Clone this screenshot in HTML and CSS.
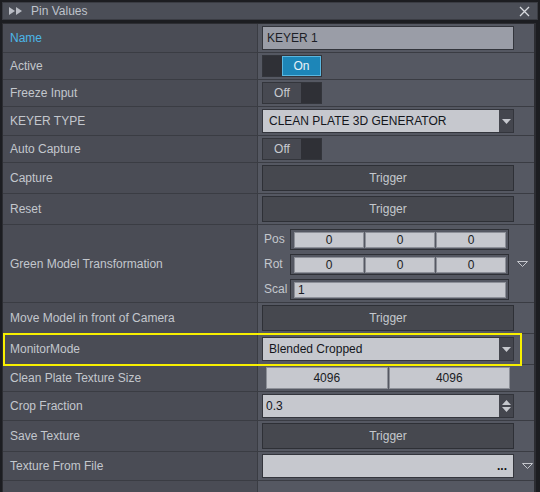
FILE: index.html
```html
<!DOCTYPE html>
<html>
<head>
<meta charset="utf-8">
<link rel="stylesheet" href="styles.css">
</head>
<body>
<div class="window">
  <div class="titlebar">
    <span class="ticon"><svg width="14" height="8" viewBox="0 0 14 8"><path d="M0 0 L6 4 L0 8 Z M7 0 L13 4 L7 8 Z" fill="#b9bcc4"/></svg></span>
    <span class="title">Pin Values</span>
    <span class="close"><svg width="11" height="11" viewBox="0 0 11 11"><path d="M1 1 L10 10 M10 1 L1 10" stroke="#d8dadf" stroke-width="1.3"/></svg></span>
  </div>
  <div class="panel">
    <div class="row h29"><div class="lab blue">Name</div><div class="val"><div class="text dim">KEYER 1</div></div></div>
    <div class="row h27"><div class="lab">Active</div><div class="val"><div class="toggle"><span class="tdark"></span><span class="ton">On</span></div></div></div>
    <div class="row h27"><div class="lab">Freeze Input</div><div class="val"><div class="toggle"><span class="toff">Off</span><span class="tdark"></span></div></div></div>
    <div class="row h29"><div class="lab">KEYER TYPE</div><div class="val"><div class="combo"><span class="ctext">CLEAN PLATE 3D GENERATOR</span><span class="carrow"><svg width="9" height="5" viewBox="0 0 9 5"><path d="M0 0 H9 L4.5 5 Z" fill="#c6c8ce"/></svg></span></div></div></div>
    <div class="row h27"><div class="lab">Auto Capture</div><div class="val"><div class="toggle"><span class="toff">Off</span><span class="tdark"></span></div></div></div>
    <div class="row h31"><div class="lab">Capture</div><div class="val"><div class="btn">Trigger</div></div></div>
    <div class="row h31"><div class="lab">Reset</div><div class="val"><div class="btn">Trigger</div></div></div>
    <div class="row h78"><div class="lab">Green Model Transformation</div><div class="val vec">
      <div class="vecgrid">
        <div class="vl">Pos</div><div class="vbox"><span>0</span><span>0</span><span>0</span></div>
        <div class="vl">Rot</div><div class="vbox"><span>0</span><span>0</span><span>0</span></div>
        <div class="vl">Scal</div><div class="vbox single"><span>1</span></div>
      </div>
      <span class="side"><svg width="11" height="6" viewBox="0 0 11 6"><path d="M0.5 0.5 H10.5 L5.5 5.5 Z" fill="none" stroke="#c4c6cc"/></svg></span>
    </div></div>
    <div class="row h31"><div class="lab">Move Model in front of Camera</div><div class="val"><div class="btn">Trigger</div></div></div>
    <div class="row h31 hl"><div class="lab">MonitorMode</div><div class="val"><div class="combo"><span class="ctext">Blended Cropped</span><span class="carrow"><svg width="9" height="5" viewBox="0 0 9 5"><path d="M0 0 H9 L4.5 5 Z" fill="#c6c8ce"/></svg></span></div></div><div class="hlbox"></div></div>
    <div class="row h27"><div class="lab">Clean Plate Texture Size</div><div class="val"><div class="pair"><span>4096</span><span>4096</span></div></div></div>
    <div class="row h29"><div class="lab">Crop Fraction</div><div class="val"><div class="combo"><span class="ctext num">0.3</span><span class="carrow spin"><svg width="9" height="14" viewBox="0 0 9 14"><path d="M0 6 L4.5 1 L9 6 Z M0 8 H9 L4.5 13 Z" fill="#c6c8ce"/></svg></span></div></div></div>
    <div class="row h31"><div class="lab">Save Texture</div><div class="val"><div class="btn">Trigger</div></div></div>
    <div class="row h29"><div class="lab">Texture From File</div><div class="val vec"><div class="file"><span class="dots">...</span></div><span class="side"><svg width="11" height="6" viewBox="0 0 11 6"><path d="M0.5 0.5 H10.5 L5.5 5.5 Z" fill="none" stroke="#c4c6cc"/></svg></span></div></div>
    <div class="row last"><div class="lab"></div><div class="val"></div></div>
  </div>
</div>
</body>
</html>
```
FILE: styles.css
```css
* { box-sizing: border-box; }
html, body { margin: 0; padding: 0; }
body {
  background: #1c1d21;
  width: 540px;
  height: 492px;
  overflow: hidden;
  font-family: "Liberation Sans", Arial, sans-serif;
  font-size: 12px;
  color: #c6c9cf;
}
.window {
  padding: 2px 2px 0 2px;
  height: 492px;
  display: flex;
  flex-direction: column;
}
.titlebar {
  height: 18px;
  background: #4b4e57;
  border: 1px solid #3a3c43;
  display: flex;
  align-items: center;
  padding-left: 6px;
}
.ticon { display: flex; width: 14px; margin-right: 8px; }
.title { color: #bfc3cb; font-size: 12px; flex: 1; }
.close { display: flex; margin-right: 7px; }
.panel {
  margin-top: 3px;
  flex: 1;
  border-left: 1px solid #2c2d32;
  border-top: 1px solid #2c2d32;
  border-right: 2px solid #2c2d32;
  display: flex;
  flex-direction: column;
  margin-right: 2px;
}
.row {
  display: grid;
  grid-template-columns: 255px 1fr;
  border-bottom: 1px solid #3a3c43;
  position: relative;
}
.row.last { flex: 1; border-bottom: none; }
.h27 { height: 27px; }
.h29 { height: 29px; }
.h31 { height: 31px; }
.h78 { height: 78px; }
.lab {
  background: #4a4c55;
  display: flex;
  align-items: center;
  padding-left: 7px;
  color: #c3c7cd;
  border-right: 1px solid #3a3c43;
}
.lab.blue { color: #4cb6e8; }
.val {
  background: #555862;
  display: flex;
  align-items: center;
  padding-left: 4px;
}
.text {
  width: 252px;
  height: 24px;
  background: #9a9da7;
  border: 1px solid #33353c;
  display: flex;
  align-items: center;
  padding-left: 4px;
  color: #1c1e26;
}
.toggle {
  width: 60px;
  height: 22px;
  border: 1px solid #33353b;
  display: flex;
}
.toggle span { height: 100%; display: flex; align-items: center; justify-content: center; }
.tdark { width: 19px; background: #2f3036; }
.ton { flex: 1; background: #1d86b8; color: #e8f2f8; border: 1px solid #5ab7e0; }
.toff { width: 39px; background: #474951; color: #c8cbd0; border-right: 1px solid #2f3036; }
.combo {
  width: 252px;
  height: 24px;
  background: #c6c8ce;
  border: 1px solid #33353c;
  display: flex;
  align-items: center;
  color: #14161c;
}
.ctext { flex: 1; padding-left: 6px; }
.ctext.num { padding-left: 3px; }
.carrow {
  width: 14px;
  height: 100%;
  background: #44464e;
  display: flex;
  align-items: center;
  justify-content: center;
}
.btn {
  width: 252px;
  height: 26px;
  background: #46484f;
  border: 1px solid #2e3036;
  display: flex;
  align-items: center;
  justify-content: center;
  color: #c5c8cd;
}
.vec { position: relative; }
.vecgrid {
  display: grid;
  grid-template-columns: 26px 219px;
  row-gap: 4px;
  align-items: center;
  padding-top: 1px;
  margin-left: 2px;
}
.vl { color: #c3c7cd; }
.vbox {
  height: 21px;
  border: 1px solid #2e3036;
  background: #555862;
  display: flex;
  padding: 2px 2px 1px 3px;
  gap: 1px;
}
.vbox span {
  flex: 1;
  background: #c6c8ce;
  border: 1px solid #8d9098;
  display: flex;
  align-items: center;
  justify-content: center;
  color: #1a1c24;
  line-height: 1;
}
.vbox.single span { justify-content: flex-start; padding-left: 3px; }
.side { display: flex; margin-left: 8px; }
.pair {
  width: 244px;
  margin-left: 4px;
  height: 22px;
  display: flex;
  gap: 1px;
}
.pair span {
  flex: 1;
  background: #c6c8ce;
  border: 1px solid #8d9098;
  display: flex;
  align-items: center;
  justify-content: center;
  color: #1a1c24;
}
.file {
  width: 252px;
  height: 24px;
  background: #c6c8ce;
  border: 1px solid #33353c;
  display: flex;
  align-items: center;
  justify-content: flex-end;
  padding-right: 6px;
  color: #111;
}
.dots { font-weight: bold; }
.hlbox {
  position: absolute;
  left: 0;
  top: -1px;
  width: 519px;
  height: 33px;
  border: 2px solid #f8f000;
  pointer-events: none;
  z-index: 2;
}
```
